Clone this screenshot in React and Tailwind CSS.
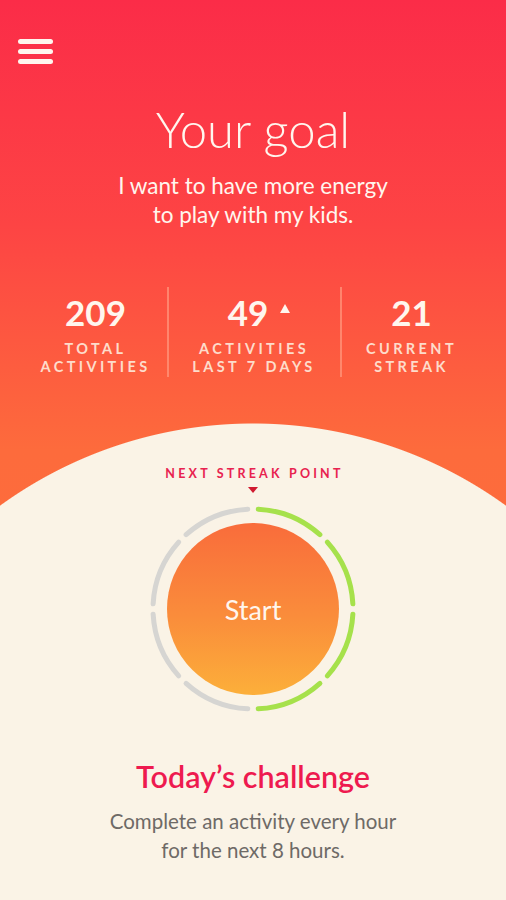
import React from "react";

const segments = Array.from({ length: 8 }, (_, i) => ({
  from: i * 45 + 3,
  to: (i + 1) * 45 - 3,
  done: i < 4,
}));

function arcPath(cx, cy, r, a0, a1) {
  const p = (a) => {
    const rad = ((a - 90) * Math.PI) / 180;
    return [cx + r * Math.cos(rad), cy + r * Math.sin(rad)];
  };
  const [x0, y0] = p(a0);
  const [x1, y1] = p(a1);
  return `M ${x0} ${y0} A ${r} ${r} 0 0 1 ${x1} ${y1}`;
}

function Stat({ value, label1, label2, width, arrow }) {
  return (
    <div className={`flex flex-col items-center pb-[1px] pt-[5px] ${width}`}>
      <div
        className={`relative text-[35px] font-bold leading-[40px] text-[#fff6ee] ${arrow ? "mr-[12px]" : ""}`}
      >
        {value}
        {arrow && (
          <span className="absolute left-[52px] top-[12px] h-0 w-0 border-x-[5px] border-b-[9px] border-x-transparent border-b-[#fff6ee]" />
        )}
      </div>
      <div className="mt-[8px] text-center text-[14.5px] font-bold uppercase leading-[18px] tracking-[3.4px] text-[#fddccb]">
        <div>{label1}</div>
        <div>{label2}</div>
      </div>
    </div>
  );
}

export default function App() {
  return (
    <div
      className="h-[900px] w-full overflow-hidden bg-[radial-gradient(circle_at_253px_854px,#faf3e6_430px,transparent_431px),linear-gradient(180deg,#fb2c48_0%,#fd4444_25%,#fd6b3c_50%,#fd6f3b_100%)]"
      style={{ fontFamily: "Lato, 'Open Sans', sans-serif" }}
    >
      <div className="pl-[18px] pt-[39px]">
        <div className="flex w-[35px] flex-col gap-[5px]">
          <span className="h-[5px] rounded-full bg-[#fff6ee]" />
          <span className="h-[5px] rounded-full bg-[#fff6ee]" />
          <span className="h-[5px] rounded-full bg-[#fff6ee]" />
        </div>
      </div>

      <h1 className="mt-[37px] text-center text-[49px] font-light leading-[56px] text-[#fff6ee]">
        Your goal
      </h1>
      <p className="mt-[14px] text-center text-[22.5px] leading-[29px] text-[#fff6ee]">
        I want to have more energy
        <br />
        to play with my kids.
      </p>

      <div className="mt-[58px] flex justify-center">
        <Stat value="209" label1="Total" label2="Activities" width="w-[142px]" />
        <div className="w-[2px] bg-[#ff9a80]/70" />
        <Stat value="49" label1="Activities" label2="Last 7 days" width="w-[171px]" arrow />
        <div className="w-[2px] bg-[#ff9a80]/70" />
        <Stat value="21" label1="Current" label2="Streak" width="w-[140px]" />
      </div>

      <div className="mt-[89px] flex flex-col items-center">
        <div className="pl-[3px] text-[12.5px] font-bold uppercase leading-[16px] tracking-[3.2px] text-[#e8224f]">
          Next streak point
        </div>
        <span className="mt-[5px] h-0 w-0 border-x-[5px] border-t-[6px] border-x-transparent border-t-[#d01a30]" />

        <div className="mt-[9px] flex h-[214px] w-[214px] items-center justify-center">
          <svg width="214" height="214" viewBox="0 0 214 214" className="absolute">
            {segments.map((s, i) => (
              <path
                key={i}
                d={arcPath(107, 107, 100, s.from, s.to)}
                fill="none"
                stroke={s.done ? "#a6e14b" : "#d6d5d2"}
                strokeWidth="5"
                strokeLinecap="round"
              />
            ))}
          </svg>
          <div className="flex h-[172px] w-[172px] items-center justify-center rounded-full bg-[linear-gradient(180deg,#f96c3b_0%,#fa8d3b_55%,#fcaf3a_100%)]">
            <span className="text-[27px] leading-none text-[#fff6ee]">Start</span>
          </div>
        </div>

        <h2 className="mt-[41px] text-[30.5px] font-semibold leading-[38px] text-[#ee1a4f]">
          Today’s challenge
        </h2>
        <p className="mt-[12px] text-center text-[20.5px] leading-[29px] text-[#6e6a66]">
          Complete an activity every hour
          <br />
          for the next 8 hours.
        </p>
      </div>
    </div>
  );
}
